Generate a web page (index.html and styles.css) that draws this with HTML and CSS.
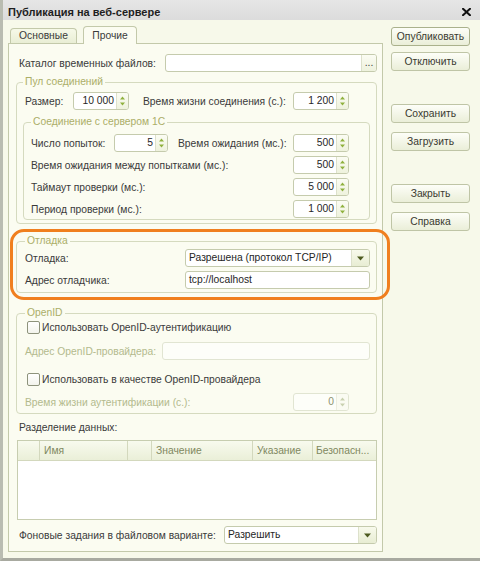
FILE: index.html
```html
<!DOCTYPE html>
<html lang="ru">
<head>
<meta charset="utf-8">
<title>Публикация на веб-сервере</title>
<link rel="stylesheet" href="styles.css">
</head>
<body>
<div class="window">
  <div class="titlebar">
    <span class="title">Публикация на веб-сервере</span>
    <svg class="close" width="9" height="8" viewBox="0 0 9 8"><path d="M1 0.8 L8 7.2 M8 0.8 L1 7.2" stroke="#111" stroke-width="2" stroke-linecap="square"/></svg>
  </div>
  <div class="main">
    <div class="left">
      <div class="tabs">
        <div class="tab t-main">Основные</div>
        <div class="tab t-other active">Прочие</div>
      </div>
      <div class="panel">
        <div class="row r-catalog">
          <span class="lbl w-catalog">Каталог временных файлов:</span>
          <div class="field f-catalog"><span class="val"></span><span class="dots">...</span></div>
        </div>

        <fieldset class="grp g-pool">
          <legend>Пул соединений</legend>
          <div class="row">
            <span class="lbl w-size">Размер:</span>
            <div class="field spin w56"><span class="val">10 000</span><span class="spinbtn"><svg width="11" height="16" viewBox="0 0 11 16"><path d="M3 6.5 L5.5 3.5 L8 6.5 Z M3 9.5 L5.5 12.5 L8 9.5 Z" fill="#8fb13e"/></svg></span></div>
            <span class="lbl w-life">Время жизни соединения (с.):</span>
            <div class="field spin w56"><span class="val">1 200</span><span class="spinbtn"><svg width="11" height="16" viewBox="0 0 11 16"><path d="M3 6.5 L5.5 3.5 L8 6.5 Z M3 9.5 L5.5 12.5 L8 9.5 Z" fill="#8fb13e"/></svg></span></div>
          </div>
          <fieldset class="grp g-conn">
            <legend>Соединение с сервером 1С</legend>
            <div class="row">
              <span class="lbl w-tries">Число попыток:</span>
              <div class="field spin w54"><span class="val">5</span><span class="spinbtn"><svg width="11" height="16" viewBox="0 0 11 16"><path d="M3 6.5 L5.5 3.5 L8 6.5 Z M3 9.5 L5.5 12.5 L8 9.5 Z" fill="#8fb13e"/></svg></span></div>
              <span class="lbl w-wait">Время ожидания (мс.):</span>
              <div class="field spin w56"><span class="val">500</span><span class="spinbtn"><svg width="11" height="16" viewBox="0 0 11 16"><path d="M3 6.5 L5.5 3.5 L8 6.5 Z M3 9.5 L5.5 12.5 L8 9.5 Z" fill="#8fb13e"/></svg></span></div>
            </div>
            <div class="row gap">
              <span class="lbl w-long">Время ожидания между попытками (мс.):</span>
              <div class="field spin w56"><span class="val">500</span><span class="spinbtn"><svg width="11" height="16" viewBox="0 0 11 16"><path d="M3 6.5 L5.5 3.5 L8 6.5 Z M3 9.5 L5.5 12.5 L8 9.5 Z" fill="#8fb13e"/></svg></span></div>
            </div>
            <div class="row gap">
              <span class="lbl w-long">Таймаут проверки (мс.):</span>
              <div class="field spin w56"><span class="val">5 000</span><span class="spinbtn"><svg width="11" height="16" viewBox="0 0 11 16"><path d="M3 6.5 L5.5 3.5 L8 6.5 Z M3 9.5 L5.5 12.5 L8 9.5 Z" fill="#8fb13e"/></svg></span></div>
            </div>
            <div class="row gap">
              <span class="lbl w-long">Период проверки (мс.):</span>
              <div class="field spin w56"><span class="val">1 000</span><span class="spinbtn"><svg width="11" height="16" viewBox="0 0 11 16"><path d="M3 6.5 L5.5 3.5 L8 6.5 Z M3 9.5 L5.5 12.5 L8 9.5 Z" fill="#8fb13e"/></svg></span></div>
            </div>
          </fieldset>
        </fieldset>

        <div class="debug-wrap">
          <fieldset class="grp g-debug">
            <legend>Отладка</legend>
            <div class="row">
              <span class="lbl w-debug">Отладка:</span>
              <div class="field select w185"><span class="val">Разрешена (протокол TCP/IP)</span><span class="dropbtn"><svg width="17" height="16" viewBox="0 0 17 16"><path d="M5 6.5 L12 6.5 L8.5 10.5 Z" fill="#4d5a1f"/></svg></span></div>
            </div>
            <div class="row gap">
              <span class="lbl w-debug">Адрес отладчика:</span>
              <div class="field w185"><span class="val">tcp://localhost</span></div>
            </div>
          </fieldset>
          <div class="highlight"></div>
        </div>

        <fieldset class="grp g-openid">
          <legend>OpenID</legend>
          <div class="row cbrow">
            <span class="cb"></span><span class="lbl">Использовать OpenID-аутентификацию</span>
          </div>
          <div class="row r-addr">
            <span class="lbl dis w-addr">Адрес OpenID-провайдера:</span>
            <div class="field disabled w208"><span class="val"></span></div>
          </div>
          <div class="row cbrow r-cb2">
            <span class="cb"></span><span class="lbl">Использовать в качестве OpenID-провайдера</span>
          </div>
          <div class="row r-life">
            <span class="lbl dis w-authlife">Время жизни аутентификации (с.):</span>
            <div class="field spin disabled w56"><span class="val">0</span><span class="spinbtn"><svg width="11" height="16" viewBox="0 0 11 16"><path d="M3 6.5 L5.5 3.5 L8 6.5 Z M3 9.5 L5.5 12.5 L8 9.5 Z" fill="#c9d1b0"/></svg></span></div>
          </div>
        </fieldset>

        <div class="sep-label">Разделение данных:</div>
        <div class="table">
          <div class="thead">
            <div class="th"></div>
            <div class="th">Имя</div>
            <div class="th"></div>
            <div class="th">Значение</div>
            <div class="th">Указание</div>
            <div class="th last">Безопасн...</div>
          </div>
          <div class="tbody"></div>
        </div>

        <div class="row r-bg">
          <span class="lbl w-bg">Фоновые задания в файловом варианте:</span>
          <div class="field select w153"><span class="val">Разрешить</span><span class="dropbtn"><svg width="17" height="16" viewBox="0 0 17 16"><path d="M5 6.5 L12 6.5 L8.5 10.5 Z" fill="#4d5a1f"/></svg></span></div>
        </div>
      </div>
    </div>

    <div class="buttons">
      <div class="btn default">Опубликовать</div>
      <div class="btn b-off">Отключить</div>
      <div class="btn grp-start">Сохранить</div>
      <div class="btn pair">Загрузить</div>
      <div class="btn grp-start">Закрыть</div>
      <div class="btn pair">Справка</div>
    </div>
  </div>
</div>
</body>
</html>
```
FILE: styles.css
```css
* { box-sizing: border-box; }
html, body { margin: 0; padding: 0; background: #ffffff; }
body {
  font-family: "Liberation Sans", Arial, sans-serif;
  font-size: 10.3px;
  color: #3a3a3a;
}

.window {
  width: 480px;
  height: 561px;
  background: #f7f9ea;
  border-left: 3px solid #b9bcb1;
  border-bottom: 3px solid #a8aaa0;
  overflow: hidden;
}

.titlebar {
  height: 20px;
  background: linear-gradient(#e6e6e6, #dcdcdc);
  display: flex;
  align-items: center;
  justify-content: space-between;
  padding: 4px 9px 0 5px;
}
.title { font-weight: bold; font-size: 11px; color: #1e1e1e; }
.close { display: block; }

.main { display: flex; padding-top: 6px; }
.left { margin-left: 5px; width: 375px; }
.buttons {
  margin-left: 8px;
  width: 79px;
  padding-top: 1px;
  display: flex;
  flex-direction: column;
}

/* tabs */
.tabs { display: flex; align-items: flex-end; height: 17px; padding-left: 2px; gap: 6px; }
.tab {
  height: 15px;
  border: 1px solid #c3c9aa;
  border-bottom: none;
  border-radius: 4px 4px 0 0;
  background: linear-gradient(#f6f9e8, #e9eed5);
  text-align: center;
  line-height: 14px;
  color: #3a3a3a;
}
.t-main { width: 67px; }
.t-other { width: 54px; }
.tab.active {
  height: 18px;
  margin-bottom: -1px;
  position: relative;
  z-index: 1;
  background: #fbfcf1;
  line-height: 17px;
}

.panel {
  height: 509px;
  border: 1px solid #c3c9aa;
  background: #fbfcf1;
  padding: 10px 5px 7px 7px;
}

/* generic rows */
.row { display: flex; align-items: center; height: 18px; }
.row.gap { margin-top: 4px; }
.lbl { white-space: nowrap; }
.dis { color: #b3ba8d; }

.w-catalog { margin-left: 3px; width: 146px; }
.w-size { margin-left: 2px; width: 48px; }
.w-life { margin-left: 14px; width: 150px; }
.w-tries { width: 83px; }
.w-wait { margin-left: 10px; width: 115px; }
.w-long { width: 262px; }
.w-debug { width: 160px; }
.w-addr { width: 137px; }
.w-authlife { width: 268px; }
.w-bg { margin-left: 3px; width: 205px; }

/* fields */
.field {
  height: 18px;
  display: flex;
  align-items: stretch;
  background: #ffffff;
  border: 1px solid #c5cbad;
  border-radius: 3px;
  overflow: hidden;
}
.field .val {
  flex: 1;
  line-height: 16px;
  padding: 0 3px 0 3px;
  white-space: nowrap;
  overflow: hidden;
  color: #262626;
}
.spin .val { text-align: right; padding-right: 2px; }
.spinbtn {
  width: 12px;
  border-left: 1px solid #dde1cb;
  background: linear-gradient(#fbfcf3, #eef2dd);
  display: flex;
  align-items: center;
  justify-content: center;
}
.spinbtn svg, .dropbtn svg { display: block; }
.dropbtn {
  width: 18px;
  border-left: 1px solid #dde1cb;
  background: linear-gradient(#f8faec, #e8edd3);
  display: flex;
  align-items: center;
  justify-content: center;
}
.dots {
  width: 15px;
  border-left: 1px solid #dde1cb;
  background: linear-gradient(#fbfcf3, #eef2dd);
  text-align: center;
  line-height: 16px;
  color: #444;
}
.select .val { padding-left: 3px; }
.field.disabled { border-color: #e1e5d2; background: #fdfef9; }
.field.disabled .val { color: #8d9270; }
.field.disabled .spinbtn { border-left-color: #eceee0; background: #fafbf2; }

.w56 { width: 56px; }
.w54 { width: 54px; }
.w185 { width: 185px; }
.w208 { width: 208px; }
.w153 { width: 153px; }
.f-catalog { width: 212px; }

/* group boxes */
.grp {
  margin: 0;
  min-width: 0;
  border: 1px solid #d5dabf;
  border-radius: 4px;
}
.grp legend {
  padding: 0 2px;
  line-height: 12px;
  font-size: 10.3px;
  color: #abae68;
}
.g-pool { margin-top: 4px; padding: 4px 6px 3px 6px; }
.g-conn { margin-top: 6px; padding: 6px 6px 1px 7px; }
.g-debug { padding: 2px 6px 3px 8px; }
.g-openid { margin-top: 14px; padding: 2px 6px 2px 8px; }

.debug-wrap { position: relative; margin-top: 11px; }
.highlight {
  position: absolute;
  left: -6px;
  top: -6px;
  right: -13px;
  bottom: -7px;
  border: 3px solid #f07f1e;
  border-radius: 14px;
  pointer-events: none;
}

.cbrow { height: 13px; }
.cb {
  width: 13px;
  height: 13px;
  margin-left: 2px;
  margin-right: 2px;
  border: 1px solid #8e937c;
  border-radius: 2px;
  background: linear-gradient(#ffffff, #f3f4ec);
}
.r-addr { margin-top: 8px; }
.r-cb2 { margin-top: 13px; }
.r-life { margin-top: 7px; }

.sep-label { margin: 8px 0 0 3px; line-height: 12px; }

.table {
  margin: 6px 0 0 1px;
  width: 360px;
  height: 80px;
  border: 1px solid #c7cdb0;
  background: #ffffff;
}
.thead {
  display: grid;
  grid-template-columns: 22px 88px 24px 101px 60px 1fr;
  height: 20px;
  border-bottom: 1px solid #d3d8bd;
  background: linear-gradient(#f8faee, #eaefd8);
}
.th {
  border-right: 1px solid #d3d8bd;
  padding-left: 4px;
  line-height: 19px;
  color: #7f8860;
  white-space: nowrap;
  overflow: hidden;
}
.th.last { border-right: none; padding-left: 3px; }

.r-bg { margin-top: 6px; }

/* buttons */
.btn {
  height: 19px;
  border: 1px solid #bfc5a6;
  border-radius: 3px;
  background: linear-gradient(#fdfef8, #eaeed8);
  text-align: center;
  line-height: 17px;
  color: #3a3a30;
}
.btn.default { border-color: #aab18c; }
.btn.b-off { margin-top: 6px; }
.btn.grp-start { margin-top: 33px; }
.btn.pair { margin-top: 9px; }
```
